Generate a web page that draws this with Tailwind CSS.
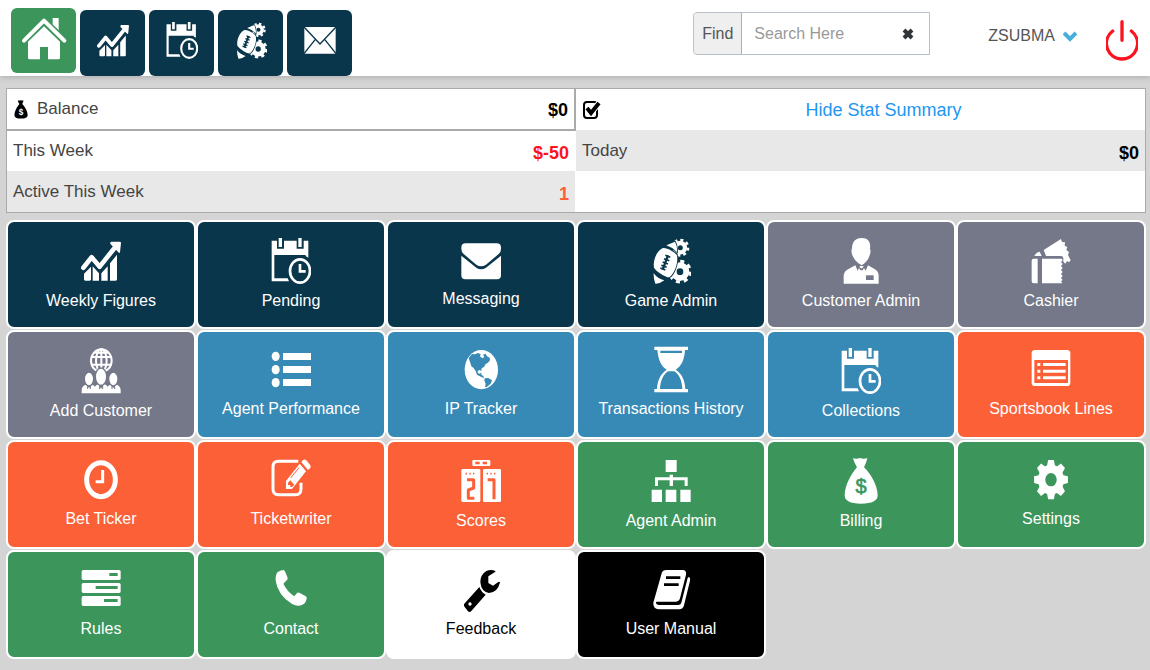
<!DOCTYPE html>
<html lang="en">
<head>
  <meta charset="UTF-8" />
  <meta name="viewport" content="width=device-width, initial-scale=1.0"/>
  <title>Agent Dashboard</title>
  <script src="https://cdn.jsdelivr.net/npm/@tailwindcss/browser@4"></script>
</head>
<body class="bg-[#d4d4d4] min-h-screen font-['Liberation_Sans',sans-serif] text-base leading-6 text-[#444]">

  <!-- icons used more than once -->
  <svg class="hidden">
    <symbol id="chart" viewBox="0 0 120 138" overflow="visible">
      <path d="M7 89 32 58 56 86 103 27" fill="none" stroke="#fff" stroke-width="14" stroke-linecap="round" stroke-linejoin="round"/>
      <path d="M88 14Q88 11 92 11H116Q120 11 120 15L117 42Q116 47 112 43L89 19Q87 17 88 14ZM9 107 30 86V124Q30 128 26 128H13Q9 128 9 124ZM35 85 54 106V128H35ZM61 106 80 85V128H61ZM87 76 108 50V124Q108 128 104 128H87Z" fill="#fff"/>
    </symbol>
    <symbol id="calendar" viewBox="0 0 120 138" overflow="visible">
      <path d="M2 8H18V32H39V8H77V32H98V8H112V59L104 54V51H10V121H50L54 130H2ZM23 0H33V27H23ZM82 0H92V27H82Z" fill="#fff"/>
      <ellipse cx="87" cy="99" rx="30" ry="35" fill="none" stroke="#fff" stroke-width="8"/>
      <path d="M87 78V100H104" fill="none" stroke="#fff" stroke-width="8"/>
    </symbol>
    <symbol id="game" viewBox="0 0 120 138" overflow="visible">
      <g fill="none" stroke="#fff">
        <circle cx="88" cy="29" r="14" stroke-width="13"/>
        <circle cx="88" cy="29" r="23" stroke-width="8" pathLength="16" stroke-dasharray="1 1"/>
        <circle cx="87" cy="101" r="19" stroke-width="18"/>
        <circle cx="87" cy="101" r="31" stroke-width="9" pathLength="16" stroke-dasharray="1 1"/>
      </g>
      <path d="M36 30C46 28 75 43 78 53C83 80 66 112 55 118C44 119 14 99 9 89C5 66 18 37 36 30ZM46 22 72 11Q80 26 78 42Q64 28 46 22ZM8 106Q20 122 40 127Q26 138 13 137Q7 122 8 106Z" fill="#fff" stroke="#0a364c" stroke-width="5" paint-order="stroke"/>
      <path d="M51 52 35 95" stroke="#0a364c" stroke-width="7"/>
      <path d="M43 52 58 58M39 62 55 68M35 72 51 78M31 82 47 88M28 90 43 96" stroke="#0a364c" stroke-width="5"/>
    </symbol>
    <symbol id="bag" viewBox="0 0 120 138" overflow="visible">
      <path d="M36 1Q48 4 57 0Q66 4 79 1Q76 14 69 28C88 46 110 82 110 112Q110 137 60 137Q11 137 11 112C11 82 32 46 48 28Q38 12 36 1Z"/>
    </symbol>
  </svg>

  <header class="flex items-start justify-between bg-white h-[76px] pl-[11px] pr-3 shadow-[0_1px_6px_#aaa]">
    <nav class="flex items-start gap-1 pt-2">
      <a href="#" aria-label="Home" class="flex items-center justify-center w-[65px] h-[65px] rounded-md bg-[#3c965c]">
        <svg class="w-11 h-11 mb-1 overflow-visible" viewBox="65 50 132 132">
          <path d="M157 53H175V100L157 84Z" fill="#fff"/>
          <path d="M70 121 131 63 193 121" fill="none" stroke="#3c965c" stroke-width="22"/>
          <path d="M71 121 131 61 192 121" fill="none" stroke="#fff" stroke-width="12" stroke-linejoin="round" stroke-linecap="round"/>
          <path d="M83 124 131 78 179 124V173Q179 177 175 177H143V140H119V177H87Q83 177 83 173Z" fill="#fff"/>
        </svg>
      </a>
      <a href="#" aria-label="Weekly Figures" class="flex justify-center w-[65px] h-[66px] mt-[2px] pt-3 rounded-md bg-[#0a364c]"><svg class="w-8 h-[37px]"><use href="#chart"/></svg></a>
      <a href="#" aria-label="Pending" class="flex justify-center w-[65px] h-[66px] mt-[2px] pt-3 rounded-md bg-[#0a364c]"><svg class="w-8 h-[37px]"><use href="#calendar"/></svg></a>
      <a href="#" aria-label="Game Admin" class="flex justify-center w-[65px] h-[66px] mt-[2px] pt-3 rounded-md bg-[#0a364c]"><svg class="w-8 h-[37px]"><use href="#game"/></svg></a>
      <a href="#" aria-label="Messaging" class="flex justify-center w-[65px] h-[66px] mt-[2px] pt-3 rounded-md bg-[#0a364c]">
        <svg class="w-8 h-[37px]" viewBox="0 0 96 111">
          <rect x="1" y="15" width="94" height="80" rx="3" fill="#fff"/>
          <path d="M0 15 48 66 96 15M0 95 34 52M96 95 62 52" fill="none" stroke="#0a364c" stroke-width="4"/>
        </svg>
      </a>
    </nav>

    <div class="flex items-start">
      <div class="flex mt-3 h-[43px] w-[237px] border border-[#b8bfc6] rounded-l bg-white">
        <label for="search" class="flex items-center justify-center w-12 shrink-0 bg-[#efefef] border-r border-[#a9b0b8] rounded-l text-[#555]">Find</label>
        <input id="search" type="text" placeholder="Search Here" class="min-w-0 flex-1 pl-3 outline-none placeholder:text-[#999]"/>
        <button type="button" aria-label="Clear" class="pr-[14px]">
          <svg class="w-[14px] h-[14px]" viewBox="0 0 14 14"><path d="M3 3 11 11M11 3 3 11" stroke="#2f3538" stroke-width="4"/></svg>
        </button>
      </div>
      <button type="button" class="flex items-center gap-2 ml-[58px] mt-6 text-[#555]">ZSUBMA
        <svg class="w-[14px] h-[11px]" viewBox="0 0 14 11"><path d="M1 2 7 8 13 2" fill="none" stroke="#45aedb" stroke-width="4"/></svg>
      </button>
      <button type="button" aria-label="Log out" class="ml-[29px] mt-5">
        <svg class="w-8 h-[41px]" viewBox="0 0 96 123"><path d="M48 5V61M20 33C-16 62 4 117 48 117S112 62 76 33" fill="none" stroke="#fb1420" stroke-width="10" stroke-linecap="round"/></svg>
      </button>
    </div>
  </header>

  <main class="pl-[6px] pr-1 pt-3">
    <section class="grid grid-cols-2 border border-[#aaa] bg-white text-[17px]">
      <table class="w-full">
        <tbody>
          <tr class="h-[41px] border-b-2 border-r-2 border-[#aaa]">
            <th scope="row" class="text-left font-normal pl-[6px]">
              <span class="flex items-center gap-2"><svg class="w-4 h-[21px]" viewBox="0 0 120 138"><use href="#bag"/><text x="60" y="108" text-anchor="middle" font-size="62" font-weight="bold" fill="#fff">$</text></svg>Balance</span>
            </th>
            <td class="text-right text-lg font-bold text-black pr-[6px] pt-[2px]">$0</td>
          </tr>
          <tr class="h-[41px]">
            <th scope="row" class="text-left font-normal pl-[6px]">This Week</th>
            <td class="text-right text-lg font-bold text-[#fb1420] pr-[6px] pt-1">$-50</td>
          </tr>
          <tr class="h-[41px] bg-[#e8e8e8]">
            <th scope="row" class="text-left font-normal pl-[6px]">Active This Week</th>
            <td class="text-right text-lg font-bold text-[#fc6037] pr-[6px] pt-1">1</td>
          </tr>
        </tbody>
      </table>
      <div>
        <div class="flex items-center h-[41px] px-[7px]">
          <label for="stat" class="relative w-[18px] h-[18px]">
            <input id="stat" type="checkbox" checked aria-label="Stat summary" class="block appearance-none w-[15px] h-[18px] border-2 border-black rounded"/>
            <svg class="absolute left-[2px] top-0 w-4 h-4" viewBox="0 0 16 16"><path d="M2 7 6 12 14 2" fill="none" stroke="#fff" stroke-width="6"/><path d="M2 7 6 12 14 2" fill="none" stroke="#000" stroke-width="4"/></svg>
          </label>
          <a href="#" class="flex-1 pl-7 text-center text-lg text-[#2196f3]">Hide Stat Summary</a>
        </div>
        <div class="flex justify-between items-center h-[41px] px-[6px] bg-[#e8e8e8]">
          <span>Today</span>
          <span class="text-lg font-bold text-black pt-1">$0</span>
        </div>
      </div>
    </section>

    <section class="grid grid-cols-6 gap-y-px pt-[7px] text-white">
      <a href="#" class="flex flex-col items-center h-[109px] pt-4 border-2 border-white rounded-lg bg-[#0a364c]">
        <svg class="w-10 h-[46px] mb-[5px]"><use href="#chart"/></svg>Weekly Figures
      </a>
      <a href="#" class="flex flex-col items-center h-[109px] pt-4 border-2 border-white rounded-lg bg-[#0a364c]">
        <svg class="w-10 h-[46px] mb-[5px]"><use href="#calendar"/></svg>Pending
      </a>
      <a href="#" class="flex flex-col items-center h-[109px] pt-4 border-2 border-white rounded-lg bg-[#0a364c]">
        <svg class="w-10 h-11 mb-[5px]" viewBox="0 0 120 132" fill="#fff">
          <path d="M1 29Q1 16 14 16H107Q120 16 120 29V33Q120 42 113 48L75 80Q60 90 46 80L8 48Q1 42 1 33ZM1 53 46 89Q60 99 75 89L120 53V112Q120 124 108 124H13Q1 124 1 112Z"/>
        </svg>Messaging
      </a>
      <a href="#" class="flex flex-col items-center h-[109px] pt-4 border-2 border-white rounded-lg bg-[#0a364c]">
        <svg class="w-10 h-[46px] mb-[5px]"><use href="#game"/></svg>Game Admin
      </a>
      <a href="#" class="flex flex-col items-center h-[109px] pt-4 border-2 border-white rounded-lg bg-[#747889]">
        <svg class="w-10 h-[46px] mb-[5px]" viewBox="0 0 120 138" fill="#fff">
          <path d="M62 0C82 0 90 14 87 32Q90 40 87 49C84 58 80 72 62 82C44 72 37 60 33 49Q30 40 33 30C34 12 42 1 62 0Z"/>
          <path d="M8 137V114Q9 98 24 92L43 82 50 98 54 90 58 97H65L69 90 74 98 81 82 99 92Q113 98 113 114V137Z"/>
          <path d="M55 84H68L64 91H59Z"/>
          <rect x="75" y="112" width="23" height="14" fill="#747889"/>
        </svg>Customer Admin
      </a>
      <a href="#" class="flex flex-col items-center h-[109px] pt-4 border-2 border-white rounded-lg bg-[#747889]">
        <svg class="w-10 h-[46px] mb-[5px]" viewBox="0 0 120 138" fill="#fff">
          <path d="M20 62V136H8Q2 136 2 130V68Q2 62 8 62ZM33 62H92L95 67 90 72 95 78 90 84 95 90 90 96 95 102 90 108 95 114 90 120 95 126 90 130 94 136H33Z"/>
          <path d="M38 36 90 3 93 12 102 13 101 23 109 27 106 36 114 42 111 51 119 67 114 73 108 69 103 77 97 71V60Q96 54 90 54H45ZM10 54Q16 42 26 41L32 54Z"/>
        </svg>Cashier
      </a>

      <a href="#" class="flex flex-col items-center h-[109px] pt-4 border-2 border-white rounded-lg bg-[#747889]">
        <svg class="w-10 h-[46px] mb-[5px]" viewBox="0 0 120 138" fill="#fff">
          <g fill="none" stroke="#fff" stroke-width="6">
            <ellipse cx="61" cy="38" rx="31" ry="34"/>
            <ellipse cx="61" cy="38" rx="16" ry="34"/>
            <path d="M61 4V70M31 27H91M31 50H91M40 14H82"/>
          </g>
          <path d="M2 136V126Q3 112 16 110L24 120 32 110Q40 111 42 116 46 110 52 109L60 122 69 109Q76 110 80 116 82 111 89 110L97 120 105 110Q118 112 119 126V136Z"/>
          <g stroke="#747889" stroke-width="4">
            <ellipse cx="24" cy="93" rx="14" ry="21"/><ellipse cx="97" cy="93" rx="14" ry="21"/><ellipse cx="60" cy="86" rx="17" ry="26"/>
            <path d="M20 114V123M28 114V123M56 112V123M65 112V123M93 114V123M101 114V123" stroke-width="3"/>
          </g>
        </svg>Add Customer
      </a>
      <a href="#" class="flex flex-col items-center h-[109px] pt-4 border-2 border-white rounded-lg bg-[#388ab6]">
        <svg class="w-10 h-11 mb-[5px]" viewBox="0 0 120 132" fill="#fff">
          <ellipse cx="14" cy="25" rx="12" ry="14"/><ellipse cx="14" cy="65" rx="12" ry="14"/><ellipse cx="14" cy="104" rx="12" ry="14"/>
          <path d="M36 15H120V36H36ZM36 54H120V75H36ZM36 93H120V114H36Z"/>
        </svg>Agent Performance
      </a>
      <a href="#" class="flex flex-col items-center h-[109px] pt-4 border-2 border-white rounded-lg bg-[#388ab6]">
        <svg class="w-10 h-11 mb-[5px]" viewBox="0 0 120 132">
          <ellipse cx="61" cy="65" rx="50" ry="59" fill="#fff"/>
          <path d="M23 30 33 18 43 19 50 15 59 18 57 25 64 31 70 27 66 20 74 17 78 25 86 29 87 37 80 45 74 48 69 57 62 61 61 69 56 66 50 69 51 76 57 77 61 73 61 80 67 84 69 90 61 87 48 80 44 69 37 59 31 55 28 45ZM71 91 82 90 93 97 90 106 82 113 76 118 72 116 74 107 70 98Z" fill="#388ab6"/>
        </svg>IP Tracker
      </a>
      <a href="#" class="flex flex-col items-center h-[109px] pt-4 border-2 border-white rounded-lg bg-[#388ab6]">
        <svg class="w-10 h-11 mb-[5px] overflow-visible" viewBox="0 0 120 132" fill="#fff">
          <path d="M10 -4H111V6H102C100 38 90 55 74 65C94 78 102 98 103 123H111V133H10V123H18C19 98 28 78 47 65C31 55 22 38 19 6H10Z"/>
          <path d="M28 8H93V15H28ZM27 123C28 98 38 78 51 70H70C84 78 93 98 94 123Z" fill="#388ab6"/>
        </svg>Transactions History
      </a>
      <a href="#" class="flex flex-col items-center h-[109px] pt-4 border-2 border-white rounded-lg bg-[#388ab6]">
        <svg class="w-10 h-[46px] mb-[5px]"><use href="#calendar"/></svg>Collections
      </a>
      <a href="#" class="flex flex-col items-center h-[109px] pt-4 border-2 border-white rounded-lg bg-[#fc6037]">
        <svg class="w-10 h-11 mb-[5px]" viewBox="0 0 120 132" fill="#fff">
          <rect x="2" y="6" width="116" height="108" rx="10"/>
          <rect x="10" y="36" width="101" height="69" fill="#fc6037"/>
          <path d="M19 45H28V54H19ZM19 65H28V74H19ZM19 85H28V94H19ZM36 45H104V54H36ZM36 65H104V74H36ZM36 85H104V94H36Z"/>
        </svg>Sportsbook Lines
      </a>

      <a href="#" class="flex flex-col items-center h-[109px] pt-4 border-2 border-white rounded-lg bg-[#fc6037]">
        <svg class="w-10 h-11 mb-[5px]" viewBox="0 0 120 132" fill="none" stroke="#fff">
          <ellipse cx="60" cy="65" rx="43" ry="51" stroke-width="15"/>
          <path d="M65 36V71H44" stroke-width="9"/>
        </svg>Bet Ticker
      </a>
      <a href="#" class="flex flex-col items-center h-[109px] pt-4 border-2 border-white rounded-lg bg-[#fc6037]">
        <svg class="w-10 h-11 mb-[5px]" viewBox="0 0 120 132">
          <path d="M82 10H22Q6 10 6 27V92Q6 110 22 110H74Q90 110 90 92V74" fill="none" stroke="#fff" stroke-width="9"/>
          <path d="M45 69 86 17 105 40 63 93H45ZM91 12 96 6Q101 2 106 7L117 20Q121 26 117 31L111 36Z" fill="#fff" stroke="#fc6037" stroke-width="6" paint-order="stroke"/>
          <path d="M59 60 84 29" stroke="#fc6037" stroke-width="3"/>
          <path d="M51 74 58 67 70 80 63 87H58V81H51Z" fill="#fc6037"/>
        </svg>Ticketwriter
      </a>
      <a href="#" class="flex flex-col items-center h-[109px] pt-4 border-2 border-white rounded-lg bg-[#fc6037]">
        <svg class="w-10 h-[46px] mb-[5px]" viewBox="0 0 120 138" fill="#fff">
          <rect x="34" y="6" width="54" height="18" rx="4"/><rect x="1" y="33" width="57" height="99" rx="4"/><rect x="66" y="33" width="54" height="99" rx="4"/>
          <g fill="none" stroke="#fc6037" stroke-linejoin="round">
            <path d="M43 15H56M65 15H78" stroke-width="7"/>
            <path d="M14 47H18M25 47H29M36 47H40M77 47H81M88 47H92M99 47H103" stroke-width="5"/>
            <path d="M18 65H38V90L22 96V121H40M80 65H99V124" stroke-width="9"/>
          </g>
        </svg>Scores
      </a>
      <a href="#" class="flex flex-col items-center h-[109px] pt-4 border-2 border-white rounded-lg bg-[#3c965c]">
        <svg class="w-10 h-[46px] mb-[5px]" viewBox="0 0 120 138" fill="#fff">
          <path d="M44 6H77V42H44ZM56 50H66V58H110V84H101V67H66V84H56V67H21V84H12V58H56ZM2 95H33V132H2ZM44 95H76V132H44ZM88 95H119V132H88Z"/>
        </svg>Agent Admin
      </a>
      <a href="#" class="flex flex-col items-center h-[109px] pt-4 border-2 border-white rounded-lg bg-[#3c965c]">
        <svg class="w-10 h-[46px] mb-[5px]" viewBox="0 0 120 138" fill="#fff"><use href="#bag"/><text x="60" y="105" text-anchor="middle" font-size="60" fill="#3c965c" stroke="#3c965c" stroke-width="2">$</text></svg>Billing
      </a>
      <a href="#" class="flex flex-col items-center h-[109px] pt-4 border-2 border-white rounded-lg bg-[#3c965c]">
        <svg class="w-10 h-11 mb-[5px]" viewBox="0 0 120 132" fill="#fff">
          <g transform="translate(60 65) scale(.86 1)">
            <circle r="45"/>
            <path id="tooth" d="M-10 -59H10L15 -36V36L10 59H-10L-15 36V-36Z"/>
            <use href="#tooth" transform="rotate(45)"/><use href="#tooth" transform="rotate(90)"/><use href="#tooth" transform="rotate(135)"/>
            <circle r="20" fill="#3c965c"/>
          </g>
        </svg>Settings
      </a>

      <a href="#" class="flex flex-col items-center h-[109px] pt-4 border-2 border-white rounded-lg bg-[#3c965c]">
        <svg class="w-10 h-11 mb-[5px]" viewBox="0 0 120 132" fill="#fff">
          <rect x="2" y="6" width="117" height="30" rx="5"/><rect x="2" y="45" width="117" height="30" rx="5"/><rect x="2" y="84" width="117" height="30" rx="5"/>
          <path d="M85 15H110V24H85ZM44 54H110V63H44ZM69 93H110V102H69Z" fill="#3c965c"/>
        </svg>Rules
      </a>
      <a href="#" class="flex flex-col items-center h-[109px] pt-4 border-2 border-white rounded-lg bg-[#3c965c]">
        <svg class="w-10 h-11 mb-[5px]" viewBox="0 0 120 132" fill="#fff">
          <path d="M20 12Q30 6 38 6 41 7 43 13L50 29Q51 34 45 39L37 47Q48 70 70 85L78 75Q81 72 85 74L103 84Q108 87 107 90 106 106 94 110 80 117 62 107 20 80 14 38 13 20 20 12Z"/>
        </svg>Contact
      </a>
      <a href="#" class="flex flex-col items-center h-[109px] pt-4 border-2 border-white rounded-lg bg-white text-black">
        <svg class="w-10 h-11 mb-[5px]" viewBox="0 0 120 132">
          <path d="M55 57 10 107Q7 112 11 117L21 130Q26 134 31 129L74 80Q61 73 55 57Z"/>
          <circle cx="27" cy="108" r="5" fill="#fff"/>
          <path d="M103 9Q90 3 76 9 58 20 58 43 61 72 84 75 110 74 117 43 115 40 112 42L96 53 82 45V25L102 12Q104 11 103 9Z"/>
        </svg>Feedback
      </a>
      <a href="#" class="flex flex-col items-center h-[109px] pt-4 border-2 border-white rounded-lg bg-black">
        <svg class="w-10 h-11 mb-[5px]" viewBox="0 0 120 132" fill="#fff">
          <path d="M114 26Q119 31 117 38L99 112Q96 124 85 124H22Q8 122 7 108 7 101 10 94L32 16Q35 6 46 6H97Q107 8 105 20L87 91Q84 101 75 101H17Q14 102 15 106 17 111 24 111H82Q89 111 91 104L110 30Z"/>
          <path d="M45 29H88M39 50H83" stroke="#000" stroke-width="8"/>
        </svg>User Manual
      </a>
    </section>
  </main>
</body>
</html>
